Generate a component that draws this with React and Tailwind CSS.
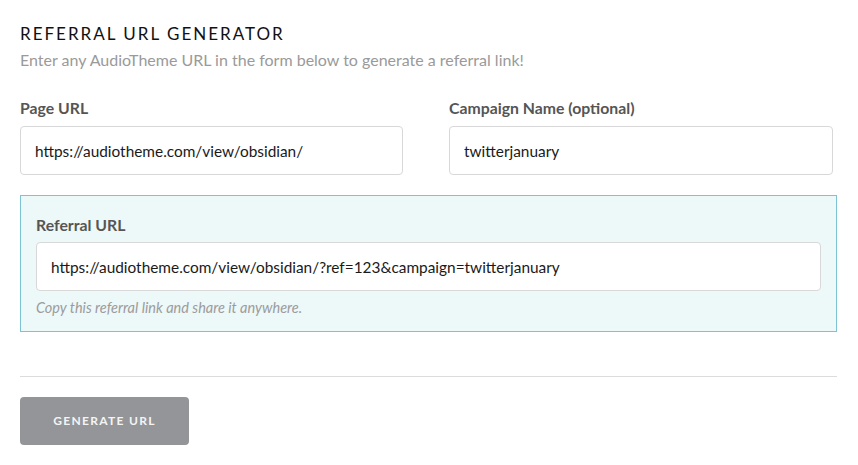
import React, { useState } from 'react';

const App = () => {
  const [pageUrl, setPageUrl] = useState('https://audiotheme.com/view/obsidian/');
  const [campaign, setCampaign] = useState('twitterjanuary');

  const referral = `${pageUrl}?ref=123&campaign=${campaign}`;

  return (
    <div className="bg-white min-h-[465px] w-[858px] pl-[20px] pr-[21px] pt-[23px] font-['Lato',sans-serif]">
      <h2 className="text-[17px] leading-[22px] tracking-[2px] text-[#111] uppercase">
        Referral URL Generator
      </h2>
      <p className="mt-[4px] text-[16px] leading-[22px] text-[#9a9a9a]">
        Enter any AudioTheme URL in the form below to generate a referral link!
      </p>

      <div className="grid grid-cols-[383px_384px] gap-x-[46px] mt-[27px]">
        <div>
          <label className="block text-[15.8px] leading-[20px] font-bold text-[#555]">Page URL</label>
          <input
            type="text"
            value={pageUrl}
            onChange={(e) => setPageUrl(e.target.value)}
            className="mt-[8px] w-full h-[49px] px-[14px] text-[15.4px] text-[#1a1a1a] bg-white border border-[#d8d8d8] rounded-[4px] focus:outline-none"
          />
        </div>
        <div>
          <label className="block text-[15.8px] leading-[20px] font-bold text-[#555]">Campaign Name (optional)</label>
          <input
            type="text"
            value={campaign}
            onChange={(e) => setCampaign(e.target.value)}
            className="mt-[8px] w-full h-[49px] px-[14px] text-[15.4px] text-[#1a1a1a] bg-white border border-[#d8d8d8] rounded-[4px] focus:outline-none"
          />
        </div>
      </div>

      <div className="mt-[20px] bg-[#edf8f9] border border-[#7cc4d2] px-[15px] pt-[19px] pb-[15px]">
        <label className="block text-[15.8px] leading-[20px] font-bold text-[#555]">Referral URL</label>
        <input
          type="text"
          readOnly
          value={referral}
          className="mt-[7px] w-full h-[49px] px-[14px] text-[15.4px] text-[#1a1a1a] bg-white border border-[#d8d8d8] rounded-[4px] focus:outline-none"
        />
        <p className="mt-[9px] text-[14.5px] leading-[16px] italic text-[#9c9c9c]">
          Copy this referral link and share it anywhere.
        </p>
      </div>

      <div className="mt-[44px] border-t border-[#dcdcdc]" />

      <button className="mt-[20px] w-[169px] h-[48px] rounded-[4px] bg-[#939598] text-[#f4f4f4] text-[12px] font-bold tracking-[1.3px] uppercase">
        Generate URL
      </button>
    </div>
  );
};

export default App;
